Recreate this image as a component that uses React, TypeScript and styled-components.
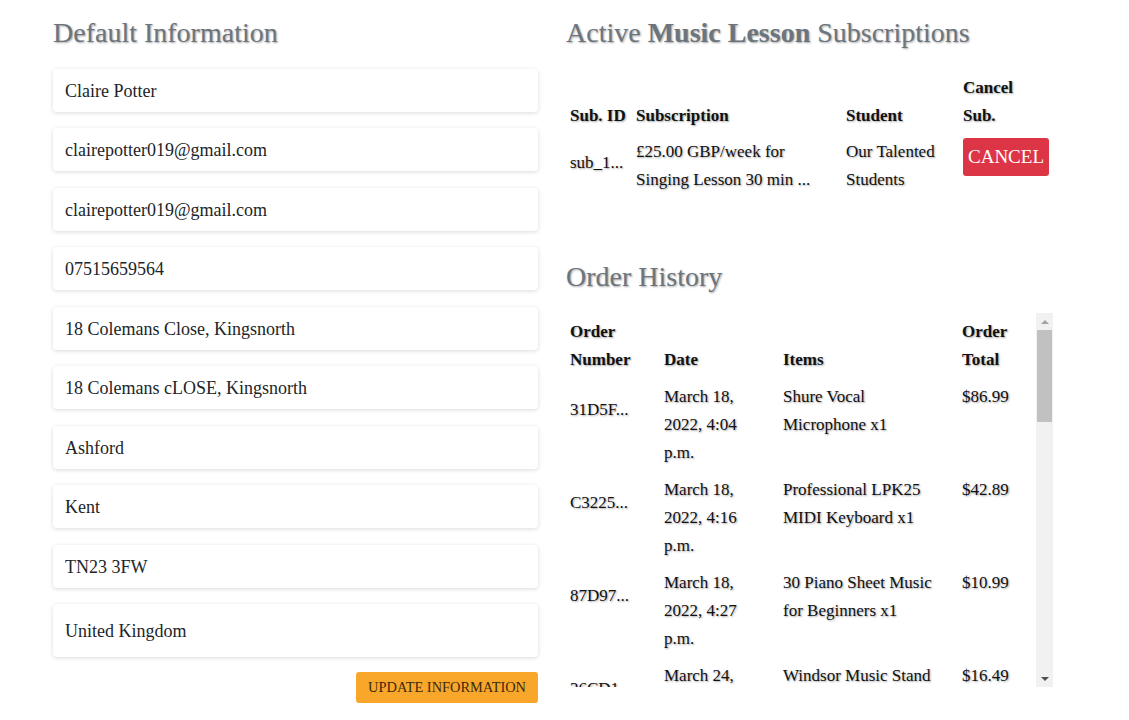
import React from "react";
import styled, { createGlobalStyle } from "styled-components";

const GlobalStyle = createGlobalStyle`
  body {
    margin: 0;
    background: #fff;
    font-family: "Liberation Serif", "Times New Roman", serif;
    color: #212529;
  }
`;

const Page = styled.main`
  display: grid;
  grid-template-columns: 485px 487px;
  column-gap: 28px;
  padding: 16px 0 0 53px;
`;

const Column = styled.section`
  display: flex;
  flex-direction: column;
`;

interface IHeading {
  $gap?: number;
  $below?: number;
}
const Heading = styled.h2<IHeading>`
  margin: ${(props) => props.$gap || 0}px 0 ${(props) => props.$below || 19}px;
  font-size: 28px;
  line-height: 34px;
  font-weight: 400;
  color: #6c757d;
  text-shadow: 1px 1px 2px rgba(0, 0, 0, 0.35);

  b {
    font-weight: 700;
  }
`;

interface IField {
  $tall?: boolean;
}
const Field = styled.input<IField>`
  box-sizing: border-box;
  width: 100%;
  height: ${(props) => (props.$tall ? 53 : 43)}px;
  margin: 0 0 ${(props) => (props.$tall ? 15 : 16.45)}px;
  padding: 2px 12px 0;
  border: none;
  border-radius: 4px;
  background: #fff;
  box-shadow: 0 1px 4px rgba(0, 0, 0, 0.15);
  font-family: inherit;
  font-size: 18px;
  color: #212529;
  outline: none;
`;

const ButtonRow = styled.div`
  display: flex;
  justify-content: flex-end;
`;

const UpdateButton = styled.button`
  height: 31px;
  padding: 0 12px;
  border: none;
  border-radius: 3px;
  background: #f9a72b;
  color: #3b2a10;
  font-family: inherit;
  font-size: 14.4px;
  text-transform: uppercase;
`;

interface ITable {
  $pad?: number;
}
const Table = styled.table<ITable>`
  width: 100%;
  border-collapse: collapse;
  table-layout: fixed;
  font-size: 17px;
  line-height: 28px;
  color: #111;
  text-shadow: 1px 1px 2px rgba(0, 0, 0, 0.35);

  th,
  td {
    padding: ${(props) => props.$pad || 4}px 4px;
  }
`;

const Th = styled.th`
  text-align: left;
  vertical-align: bottom;
  font-weight: 700;
`;

interface ITd {
  $shift?: number;
}
const Td = styled.td<ITd>`
  vertical-align: top;
  white-space: nowrap;

  && {
    padding-top: ${(props) => (props.$shift ? `calc(${props.$shift}px + 4px)` : "")};
  }
`;

const CancelButton = styled.button`
  height: 38px;
  padding: 0 5px;
  border: none;
  border-radius: 3px;
  background: #dc3545;
  color: #fff;
  font-family: inherit;
  font-size: 19px;
  text-transform: uppercase;
`;

const ScrollBox = styled.div`
  display: flex;
  height: 374px;
`;

const ScrollContent = styled.div`
  flex: 1;
  overflow: hidden;
`;

const ScrollBar = styled.div`
  display: flex;
  flex-direction: column;
  width: 17px;
  background: #f1f1f1;
`;

const ScrollArrow = styled.div`
  display: flex;
  align-items: center;
  justify-content: center;
  height: 17px;
`;

interface IArrow {
  $down?: boolean;
}
const Triangle = styled.span<IArrow>`
  width: 0;
  height: 0;
  border-left: 4px solid transparent;
  border-right: 4px solid transparent;
  ${(props) =>
    props.$down
      ? "border-top: 4px solid #505050;"
      : "border-bottom: 4px solid #a3a3a3;"}
`;

const ScrollTrack = styled.div`
  flex: 1;
  padding: 0 1px;
`;

const ScrollThumb = styled.div`
  height: 92px;
  background: #c1c1c1;
`;

const fields = [
  "Claire Potter",
  "clairepotter019@gmail.com",
  "clairepotter019@gmail.com",
  "07515659564",
  "18 Colemans Close, Kingsnorth",
  "18 Colemans cLOSE, Kingsnorth",
  "Ashford",
  "Kent",
  "TN23 3FW",
];

interface Order {
  id: string;
  date: string[];
  items: string[];
  total: string;
}

const orders: Order[] = [
  { id: "31D5F...", date: ["March 18,", "2022, 4:04", "p.m."], items: ["Shure Vocal", "Microphone x1"], total: "$86.99" },
  { id: "C3225...", date: ["March 18,", "2022, 4:16", "p.m."], items: ["Professional LPK25", "MIDI Keyboard x1"], total: "$42.89" },
  { id: "87D97...", date: ["March 18,", "2022, 4:27", "p.m."], items: ["30 Piano Sheet Music", "for Beginners x1"], total: "$10.99" },
  { id: "36CD1...", date: ["March 24,", "2022, 9:12", "a.m."], items: ["Windsor Music Stand", "Black x1"], total: "$16.49" },
];

const lines = (parts: string[]) =>
  parts.map((part, i) => (
    <React.Fragment key={i}>
      {i > 0 && <br />}
      {part}
    </React.Fragment>
  ));

const App: React.FC = () => {
  return (
    <>
      <GlobalStyle />
      <Page>
        <Column>
          <Heading>Default Information</Heading>
          {fields.map((value, i) => (
            <Field key={i} readOnly defaultValue={value} />
          ))}
          <Field $tall readOnly defaultValue="United Kingdom" />
          <ButtonRow>
            <UpdateButton>Update Information</UpdateButton>
          </ButtonRow>
        </Column>

        <Column>
          <Heading $below={20}>
            Active <b>Music Lesson</b> Subscriptions
          </Heading>
          <Table>
            <colgroup>
              <col style={{ width: 66 }} />
              <col style={{ width: 210 }} />
              <col style={{ width: 117 }} />
              <col />
            </colgroup>
            <thead>
              <tr>
                <Th>Sub. ID</Th>
                <Th>Subscription</Th>
                <Th>Student</Th>
                <Th>
                  Cancel
                  <br />
                  Sub.
                </Th>
              </tr>
            </thead>
            <tbody>
              <tr>
                <Td $shift={11}>sub_1...</Td>
                <Td>{lines(["£25.00 GBP/week for", "Singing Lesson 30 min ..."])}</Td>
                <Td>{lines(["Our Talented", "Students"])}</Td>
                <Td>
                  <CancelButton>Cancel</CancelButton>
                </Td>
              </tr>
            </tbody>
          </Table>

          <Heading $gap={62}>Order History</Heading>
          <ScrollBox>
            <ScrollContent>
              <Table $pad={4.5}>
                <colgroup>
                  <col style={{ width: 94 }} />
                  <col style={{ width: 119 }} />
                  <col style={{ width: 179 }} />
                  <col />
                </colgroup>
                <thead>
                  <tr>
                    <Th>
                      Order
                      <br />
                      Number
                    </Th>
                    <Th>Date</Th>
                    <Th>Items</Th>
                    <Th>
                      Order
                      <br />
                      Total
                    </Th>
                  </tr>
                </thead>
                <tbody>
                  {orders.map((order) => (
                    <tr key={order.id}>
                      <Td $shift={14}>{order.id}</Td>
                      <Td>{lines(order.date)}</Td>
                      <Td>{lines(order.items)}</Td>
                      <Td>{order.total}</Td>
                    </tr>
                  ))}
                </tbody>
              </Table>
            </ScrollContent>
            <ScrollBar>
              <ScrollArrow>
                <Triangle />
              </ScrollArrow>
              <ScrollTrack>
                <ScrollThumb />
              </ScrollTrack>
              <ScrollArrow>
                <Triangle $down />
              </ScrollArrow>
            </ScrollBar>
          </ScrollBox>
        </Column>
      </Page>
    </>
  );
};

export default App;
